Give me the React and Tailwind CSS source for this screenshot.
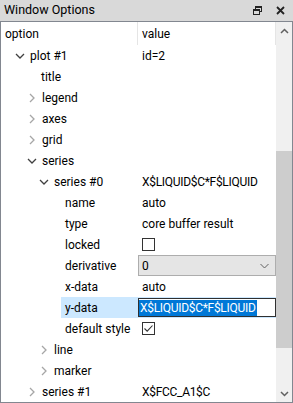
import React from "react";

const rows = [
  { label: "plot #1", level: 0, chev: "open", value: "id=2" },
  { label: "title", level: 1 },
  { label: "legend", level: 1, chev: "closed" },
  { label: "axes", level: 1, chev: "closed" },
  { label: "grid", level: 1, chev: "closed" },
  { label: "series", level: 1, chev: "open" },
  { label: "series #0", level: 2, chev: "open", value: "X$LIQUID$C*F$LIQUID", caps: true },
  { label: "name", level: 3, value: "auto" },
  { label: "type", level: 3, value: "core buffer result" },
  { label: "locked", level: 3, kind: "check" },
  { label: "derivative", level: 3, kind: "combo" },
  { label: "x-data", level: 3, value: "auto" },
  { label: "y-data", level: 3, kind: "edit", selected: true },
  { label: "default style", level: 3, kind: "checked" },
  { label: "line", level: 2, chev: "closed" },
  { label: "marker", level: 2, chev: "closed" },
  { label: "series #1", level: 1, chev: "closed", value: "X$FCC_A1$C", caps: true },
];

const indentClass = ["pl-[14px]", "pl-[26px]", "pl-[38px]", "pl-[50px]"];
const textIndent = ["pl-[29px]", "pl-[40px]", "pl-[52px]", "pl-[64px]"];

function Chevron({ type }) {
  if (type === "open") {
    return (
      <svg width="10" height="10" viewBox="0 0 10 10" className="shrink-0">
        <polyline points="1,3 5,7 9,3" fill="none" stroke="#404040" strokeWidth="1.3" />
      </svg>
    );
  }
  return (
    <svg width="10" height="10" viewBox="0 0 10 10" className="shrink-0">
      <polyline points="3,1 7,5 3,9" fill="none" stroke="#a6a6a6" strokeWidth="1.3" />
    </svg>
  );
}

function Row({ r }) {
  return (
    <div className="flex h-[21px] items-center">
      <div className="flex h-full w-[137px] shrink-0 items-center">
        {r.chev ? (
          <div className={`flex items-center ${indentClass[r.level]} gap-[5px]`}>
            <Chevron type={r.chev} />
            <span>{r.label}</span>
          </div>
        ) : r.selected ? (
          <div className="flex h-full w-full items-center">
            <div className="w-[60px] shrink-0" />
            <div className="flex h-full flex-1 items-center bg-[#cce8ff] pl-[4px]">{r.label}</div>
          </div>
        ) : (
          <div className={textIndent[r.level]}>{r.label}</div>
        )}
      </div>
      <div className={`flex h-full flex-1 items-center ${r.selected ? "bg-[#cce8ff]" : ""}`}>
        {r.value && (
          <span className={`pl-[4px] whitespace-nowrap ${r.caps ? "tracking-[-0.3px]" : ""}`}>{r.value}</span>
        )}
        {r.kind === "check" && (
          <div className="ml-[4px] h-[13px] w-[13px] border border-[#333333] bg-white" />
        )}
        {r.kind === "checked" && (
          <div className="ml-[4px] flex h-[13px] w-[13px] items-center justify-center border border-[#333333] bg-white">
            <svg width="11" height="11" viewBox="0 0 11 11">
              <polyline points="1.5,5.5 4.2,8.2 9.5,2.5" fill="none" stroke="#333333" strokeWidth="1.1" />
            </svg>
          </div>
        )}
        {r.kind === "combo" && (
          <div className="flex h-[21px] w-full items-center justify-between border border-[#adadad] bg-[#e5e5e5] pl-[3px] pr-[6px]">
            <span>0</span>
            <svg width="9" height="6" viewBox="0 0 9 6">
              <polyline points="0.5,1 4.5,5 8.5,1" fill="none" stroke="#606060" strokeWidth="1" />
            </svg>
          </div>
        )}
        {r.kind === "edit" && (
          <div className="flex h-[19px] w-full items-center border border-[#303030] bg-white">
            <span className="bg-[#0078d7] pl-[1px] pr-[2px] leading-[16px] tracking-[-0.3px] text-white whitespace-nowrap">
              X$LIQUID$C*F$LIQUID
            </span>
          </div>
        )}
      </div>
    </div>
  );
}

export default function App() {
  return (
    <div
      className="flex h-[403px] w-[293px] flex-col overflow-hidden bg-white text-[12px] text-black"
      style={{ fontFamily: 'Roboto, "Open Sans", sans-serif' }}
    >
      <div className="flex h-[21px] shrink-0 items-center justify-between bg-[#d9d9d9] pl-[4px] pr-[8px]">
        <span className="text-[12.5px]">Window Options</span>
        <div className="flex items-center gap-[14px]">
          <svg width="9" height="9" viewBox="0 0 9 9">
            <rect x="2.5" y="0.5" width="6" height="5" fill="none" stroke="#222" strokeWidth="1" />
            <line x1="2.5" y1="1.5" x2="8.5" y2="1.5" stroke="#222" strokeWidth="1" />
            <rect x="0.5" y="3.5" width="6" height="5" fill="#d9d9d9" stroke="#222" strokeWidth="1" />
            <line x1="0.5" y1="4.5" x2="6.5" y2="4.5" stroke="#222" strokeWidth="1" />
          </svg>
          <svg width="9" height="9" viewBox="0 0 9 9">
            <path d="M1 1 L8 8 M8 1 L1 8" stroke="#222" strokeWidth="1.8" />
          </svg>
        </div>
      </div>
      <div className="flex min-h-0 flex-1 border border-[#828790]">
        <div className="flex min-w-0 flex-1 flex-col">
          <div className="flex h-[23px] shrink-0 items-center">
            <div className="flex h-full w-[137px] shrink-0 items-center border-r border-[#e5e5e5] pl-[4px]">
              option
            </div>
            <div className="flex h-full flex-1 items-center border-r border-[#e5e5e5] pl-[4px]">value</div>
          </div>
          {rows.map((r, i) => (
            <Row key={i} r={r} />
          ))}
        </div>
        <div className="flex w-[16px] shrink-0 flex-col bg-[#f0f0f0]">
          <div className="flex h-[17px] items-center justify-center">
            <svg width="9" height="6" viewBox="0 0 9 6">
              <polyline points="1,5 4.5,1.5 8,5" fill="none" stroke="#606060" strokeWidth="1.5" />
            </svg>
          </div>
          <div className="mt-[112px] h-[197px] bg-[#cdcdcd]" />
          <div className="flex-1" />
          <div className="flex h-[17px] items-center justify-center">
            <svg width="9" height="6" viewBox="0 0 9 6">
              <polyline points="1,1 4.5,4.5 8,1" fill="none" stroke="#606060" strokeWidth="1.5" />
            </svg>
          </div>
        </div>
      </div>
    </div>
  );
}
